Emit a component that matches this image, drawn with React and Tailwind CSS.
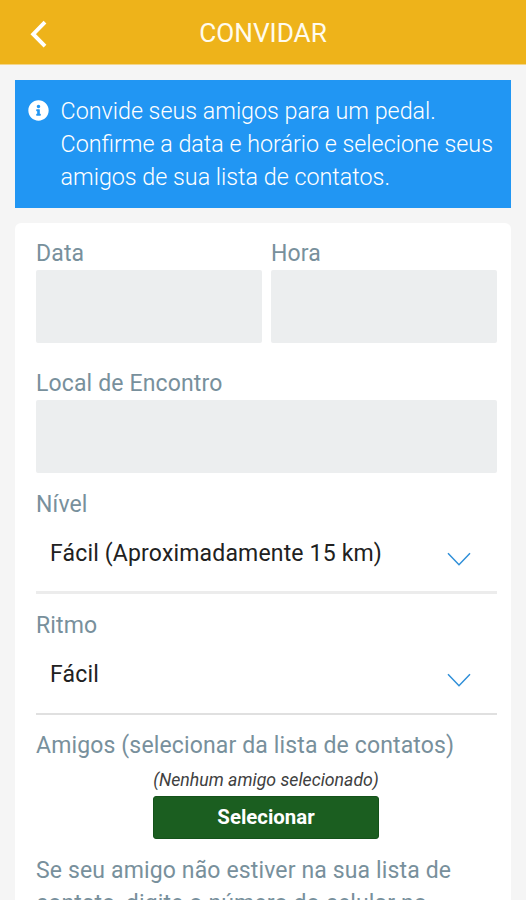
import { FaInfoCircle } from "react-icons/fa";

const labelClass =
  "block whitespace-nowrap text-[23px] tracking-[0.14px] text-[#78909c]";

const Header = ({ title }) => (
  <header className="relative flex h-[65px] shrink-0 items-center justify-center border-b border-[#f3d58a] bg-[#eeb31a] pt-px">
    <button type="button" aria-label="Voltar" className="absolute left-[30px] top-5">
      <svg width="18" height="29" viewBox="0 0 18 29" fill="none">
        <path d="M15 2.2L3.2 14.2L15 26.2" stroke="#fff" strokeWidth="3.9" />
      </svg>
    </button>
    <h1 className="text-[26.2px] leading-[32px] text-[#fffbee]">{title}</h1>
  </header>
);

const InfoBox = () => (
  <div className="mx-[15px] mt-[15px] flex h-[128px] shrink-0 bg-[#2196f3] pl-[13px] pt-[15px]">
    <FaInfoCircle className="mt-[5px] size-[21px] shrink-0 text-white" />
    <p className="ml-[11.5px] whitespace-nowrap text-[23.3px] font-light leading-[33px] text-white">
      Convide seus amigos para um pedal.
      <br />
      Confirme a data e horário e selecione seus
      <br />
      amigos de sua lista de contatos.
    </p>
  </div>
);

const Field = ({ label }) => (
  <label className="block">
    <span className={`${labelClass} leading-[32px]`}>{label}</span>
    <input
      type="text"
      className="block h-[73px] w-full rounded-[2px] bg-[#eceeef] px-4 text-[23px] outline-none"
    />
  </label>
);

const SelectField = ({ label, value, lineClass }) => (
  <div>
    <span className={`${labelClass} leading-[32px]`}>{label}</span>
    <div
      className={`flex h-[73px] items-start justify-between pl-[14px] pr-[26px] pt-4 ${lineClass}`}
    >
      <span className="whitespace-nowrap text-[23px] leading-[33px] tracking-[0.17px] text-[#212121]">
        {value}
      </span>
      <svg className="mt-[14.5px]" width="24" height="15" viewBox="0 0 24 15" fill="none">
        <path d="M1 1.2L12 12.7L23 1.2" stroke="#2f8fd8" strokeWidth="1.5" />
      </svg>
    </div>
  </div>
);

const App = () => {
  return (
    <div className="flex h-[900px] w-[526px] flex-col overflow-hidden bg-[#f5f5f5] font-['Roboto',sans-serif]">
      <Header title="CONVIDAR" />
      <InfoBox />

      <main className="mx-[15px] mt-[15px] flex-1 rounded-t-[6px] bg-white pl-[21px] pr-[14px] pt-[15px]">
        <div className="grid grid-cols-2 gap-[9px]">
          <Field label="Data" />
          <Field label="Hora" />
        </div>
        <div className="mt-[25px]">
          <Field label="Local de Encontro" />
        </div>
        <div className="mt-4">
          <SelectField
            label="Nível"
            value="Fácil (Aproximadamente 15 km)"
            lineClass="border-b-[3px] border-[#ececec]"
          />
        </div>
        <div className="mt-4">
          <SelectField
            label="Ritmo"
            value="Fácil"
            lineClass="border-b-2 border-[#e0e0e0]"
          />
        </div>

        <section className="mt-[15px]">
          <h2 className={`${labelClass} leading-[32px]`}>
            Amigos (selecionar da lista de contatos)
          </h2>
          <div className="flex flex-col items-center pr-px">
            <p className="mt-[6px] whitespace-nowrap text-[17.7px] italic leading-[24px] text-[#404040]">
              (Nenhum amigo selecionado)
            </p>
            <button
              type="button"
              className="mt-[4px] h-[43px] w-[226px] rounded-[3px] border border-[#14521a] bg-[#1b5e20] text-[20.4px] font-bold leading-[39px] text-white"
            >
              Selecionar
            </button>
          </div>
          <p className={`${labelClass} mt-[15px] leading-[33px]`}>
            Se seu amigo não estiver na sua lista de
            <br />
            contato, digite o número do celular no
          </p>
        </section>
      </main>
    </div>
  );
};

export default App;
